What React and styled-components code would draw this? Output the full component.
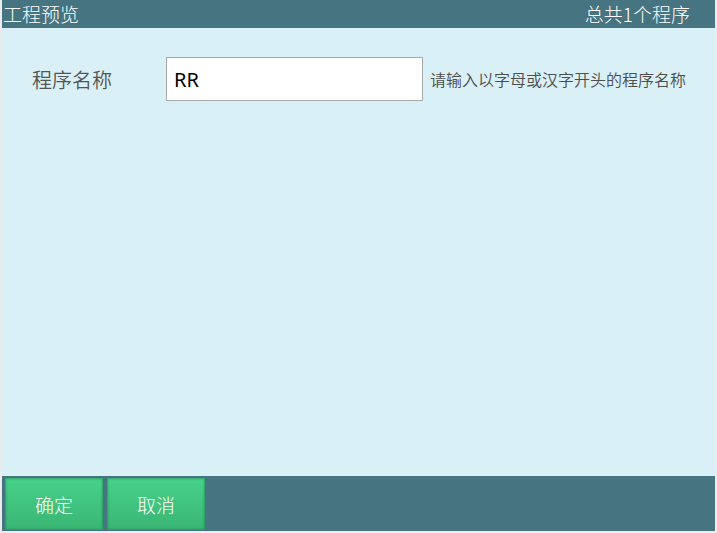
import React from "react";
import styled, { createGlobalStyle } from "styled-components";

const Global = createGlobalStyle`
  html, body { margin: 0; padding: 0; background: #ececec; }
  body { font-family: "Noto Sans CJK SC", "Noto Sans", sans-serif; }
  * { box-sizing: border-box; }
`;

const Frame = styled.div`
  width: 717px;
  height: 533px;
  display: flex;
  flex-direction: column;
  padding: 0 2px 2px 2px;
  background: #ececec;
`;

const Header = styled.div`
  height: 28px;
  background: #467480;
  color: #fff;
  display: flex;
  align-items: center;
  justify-content: space-between;
  padding: 0 25px 0 1px;
  font-size: 19px;
  line-height: 28px;
  font-weight: 300;
`;

const Body = styled.div`
  flex: 1;
  background: #d9f0f6;
  padding: 29px 0 0 30px;
`;

const Row = styled.div`
  display: flex;
  align-items: center;
`;

const Label = styled.div`
  width: 134px;
  font-size: 20px;
  color: #555;
  font-weight: 350;
`;

const Input = styled.input`
  width: 257px;
  height: 44px;
  border: 1px solid #a9a9a9;
  background: #fff;
  font-family: "Noto Sans", "Noto Sans CJK SC", sans-serif;
  font-size: 20px;
  color: #000;
  padding: 0 8px 0 7px;
  outline: none;
`;

const Hint = styled.div`
  margin-left: 7px;
  font-size: 16px;
  color: #4d4d4d;
  font-weight: 350;
`;

const Footer = styled.div`
  height: 55px;
  background: #467480;
  display: flex;
  gap: 4px;
  padding: 2px 3px 1px 3px;
`;

const Button = styled.button`
  width: 98px;
  height: 52px;
  border: none;
  background: linear-gradient(#47d28a, #3ab573);
  box-shadow: inset 0 0 2px 1px rgba(30, 130, 80, 0.6);
  color: #fff;
  font-family: "Noto Sans CJK SC", sans-serif;
  font-size: 19px;
  font-weight: 300;
  padding: 0;
  cursor: pointer;
`;

export default function App() {
  return (
    <>
      <Global />
      <Frame>
        <Header>
          <span>工程预览</span>
          <span>总共1个程序</span>
        </Header>
        <Body>
          <Row>
            <Label>程序名称</Label>
            <Input defaultValue="RR" />
            <Hint>请输入以字母或汉字开头的程序名称</Hint>
          </Row>
        </Body>
        <Footer>
          <Button>确定</Button>
          <Button>取消</Button>
        </Footer>
      </Frame>
    </>
  );
}
